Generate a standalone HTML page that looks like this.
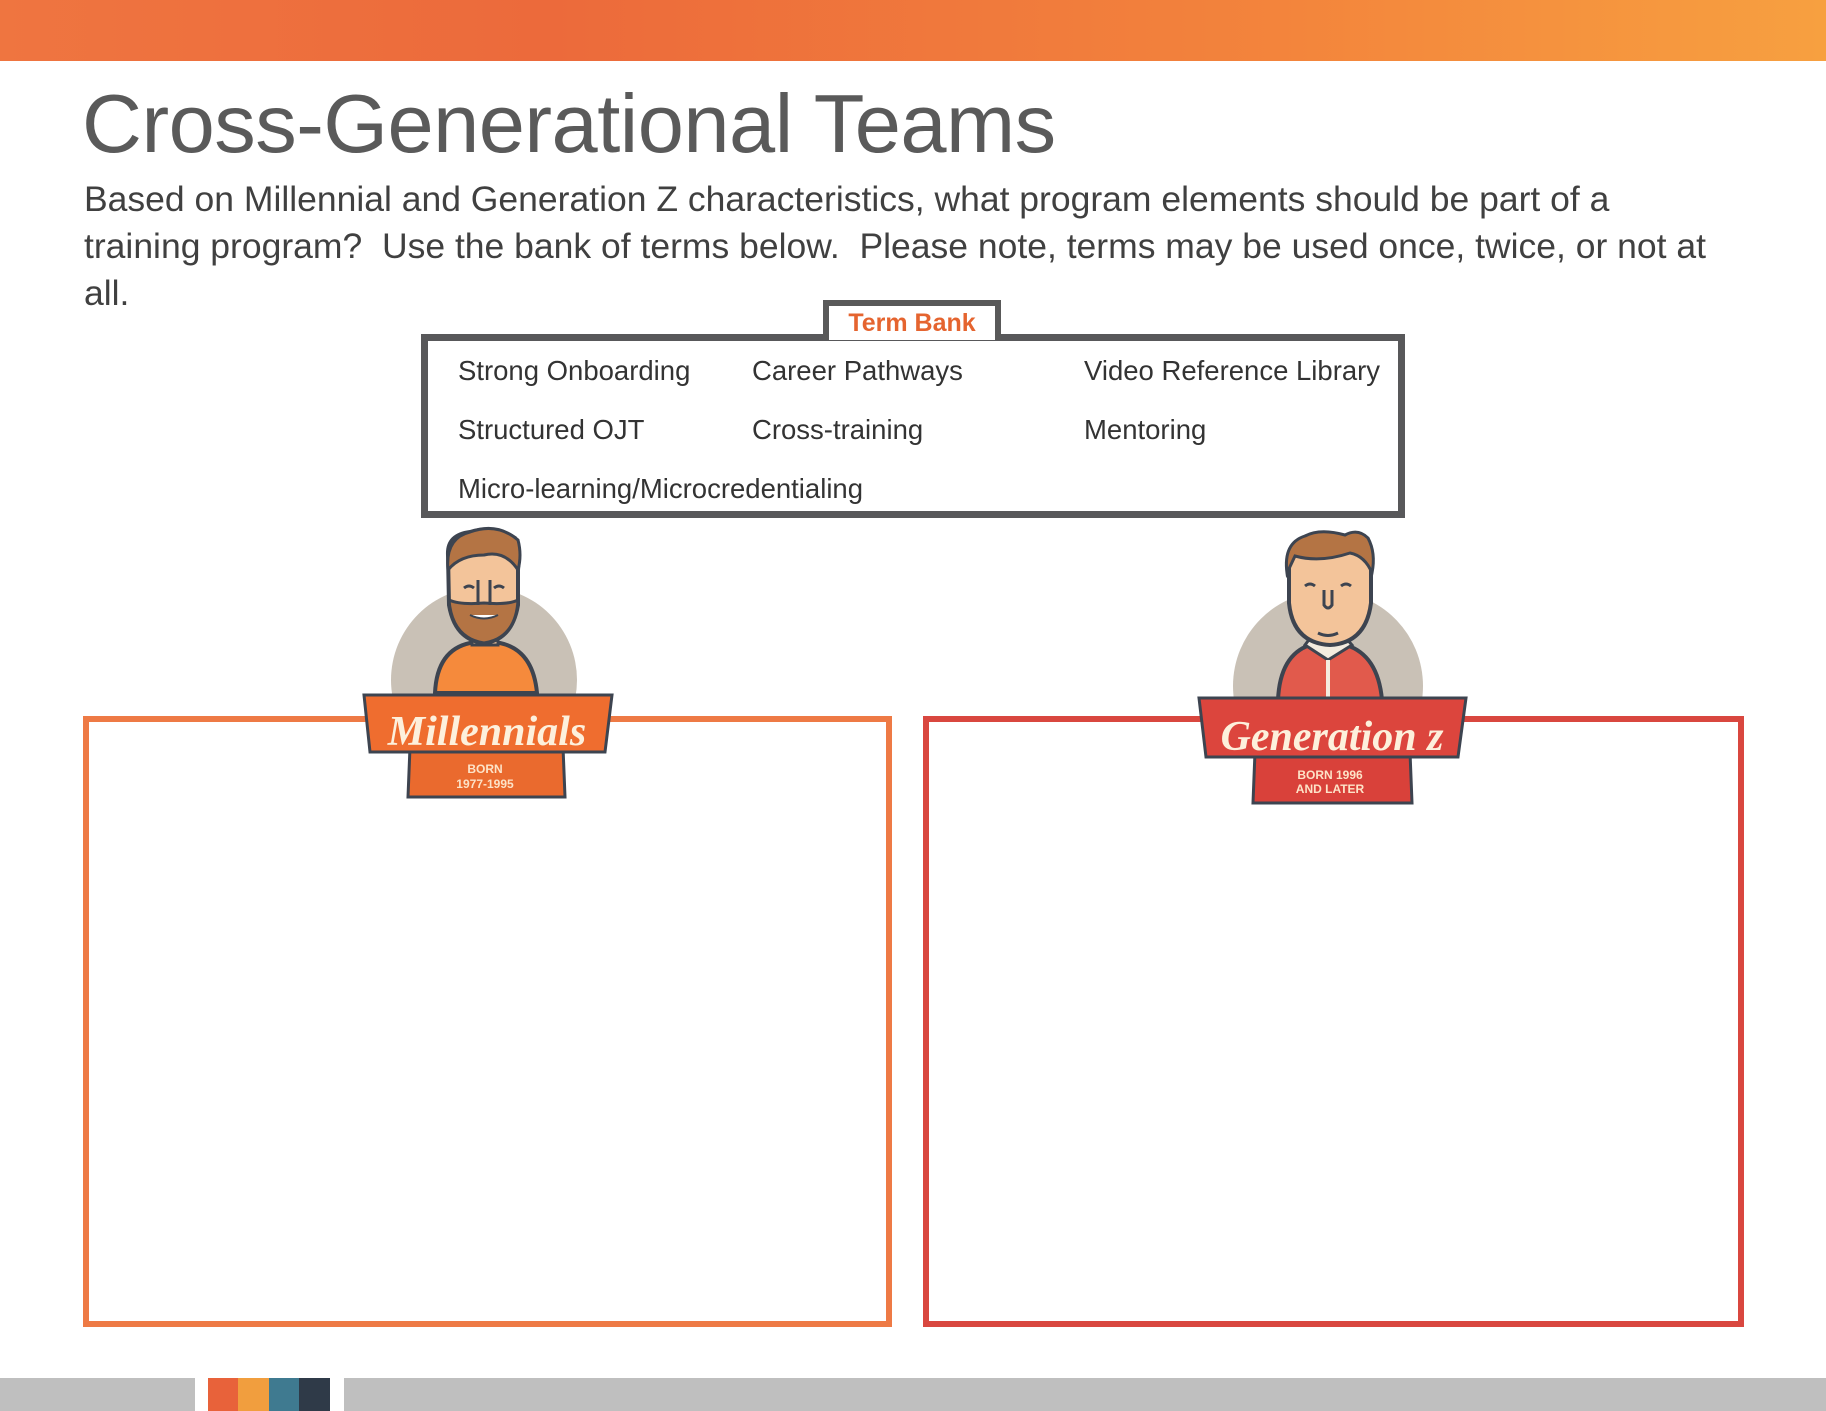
<!DOCTYPE html>
<html><head><meta charset="utf-8"><style>
*{margin:0;padding:0;box-sizing:border-box}
body{width:1826px;height:1411px;position:relative;background:#fff;font-family:"Liberation Sans",sans-serif;overflow:hidden}
.top{position:absolute;left:0;top:0;width:1826px;height:61px;background:linear-gradient(90deg,#ef7540 0%,#ec6a3b 30%,#f3843c 70%,#f7a040 100%)}
h1{position:absolute;left:82px;top:76px;font-size:83px;font-weight:normal;color:#5a5a5a;white-space:nowrap;letter-spacing:-0.5px}
.p{position:absolute;left:84px;top:176px;font-size:35.5px;line-height:47px;color:#404040;white-space:nowrap}
.tb{position:absolute;left:823px;top:300px;width:178px;height:40px;border:6px solid #595959;border-bottom:none;background:#fff;color:#e5642f;font-weight:bold;font-size:25px;text-align:center;line-height:34px;z-index:2}
.bank{position:absolute;left:421px;top:334px;width:984px;height:184px;border:7px solid #58585a}
.t{position:absolute;font-size:27.5px;color:#333;white-space:nowrap}
.bx{position:absolute;border:6px solid}
.g{position:absolute;top:1378px;height:33px;background:#bfbfbf}
.c{position:absolute;top:1378px;height:33px}
</style></head><body>
<div class="top"></div>
<h1>Cross-Generational Teams</h1>
<div class="p">Based on Millennial and Generation Z characteristics, what program elements should be part of a<br>training program?&nbsp; Use the bank of terms below.&nbsp; Please note, terms may be used once, twice, or not at<br>all.</div>
<div class="tb">Term Bank</div>
<div class="bank"></div>
<div class="t" style="left:458px;top:355px">Strong Onboarding</div>
<div class="t" style="left:752px;top:355px">Career Pathways</div>
<div class="t" style="left:1084px;top:355px">Video Reference Library</div>
<div class="t" style="left:458px;top:414px">Structured OJT</div>
<div class="t" style="left:752px;top:414px">Cross-training</div>
<div class="t" style="left:1084px;top:414px">Mentoring</div>
<div class="t" style="left:458px;top:473px">Micro-learning/Microcredentialing</div>
<div class="bx" style="left:83px;top:716px;width:809px;height:611px;border-color:#ee7a45"></div>
<div class="bx" style="left:923px;top:716px;width:821px;height:611px;border-color:#d9473f"></div>
<svg style="position:absolute;left:0;top:0" width="1826" height="1411">
<circle cx="484" cy="680" r="93" fill="#c9c1b6"/>
<g transform="translate(0,10)">
<path d="M435 683 Q437 640 470 633 L500 633 Q533 640 537 683Z" fill="#f58a3c" stroke="#3d4450" stroke-width="4"/>
<rect x="472" y="620" width="26" height="15" fill="#f3c49a" stroke="#3d4450" stroke-width="3"/>
<path d="M448 545 Q447 525 470 522 Q495 515 515 528 Q520 540 518 560 L518 595 Q512 630 484 633 Q455 630 449 595Z" fill="#f3c49a" stroke="#3d4450" stroke-width="4"/>
<path d="M448 560 Q445 528 470 522 Q497 512 518 530 Q522 545 518 560 Q505 540 484 545 Q460 545 448 560Z" fill="#b47444" stroke="#3d4450" stroke-width="3"/>
<path d="M449 590 Q460 595 484 593 Q508 595 518 590 Q516 628 484 633 Q452 628 449 590Z" fill="#b47444" stroke="#3d4450" stroke-width="3"/>
<path d="M470 605 Q484 612 498 605" fill="#fff" stroke="#3d4450" stroke-width="2"/>
<path d="M478 570 L478 595 M490 570 L490 595" stroke="#3d4450" stroke-width="3"/>
<path d="M464 578 q5-4 10 0 M494 578 q5-4 10 0" stroke="#3d4450" stroke-width="3" fill="none"/>
</g>
<path d="M410 747 L563 747 L565 797 L408 797Z" fill="#ea6a2e" stroke="#3d4450" stroke-width="3"/>
<path d="M364 695 L612 695 L605 752 L370 752Z" fill="#ef6d2f" stroke="#3d4450" stroke-width="3"/>
<text x="487" y="745" text-anchor="middle" font-family="Liberation Serif,serif" font-style="italic" font-weight="bold" font-size="42" fill="#fdf0dc">Millennials</text>
<text x="485" y="773" text-anchor="middle" font-family="Liberation Sans,sans-serif" font-weight="bold" font-size="12" fill="#fde3c8">BORN</text>
<text x="485" y="788" text-anchor="middle" font-family="Liberation Sans,sans-serif" font-weight="bold" font-size="12" fill="#fde3c8">1977-1995</text>
<circle cx="1328" cy="686" r="95" fill="#c9c1b6"/>
<g transform="translate(0,8)">
<path d="M1278 692 Q1280 647 1310 637 L1346 637 Q1378 647 1382 692Z" fill="#e15a4c" stroke="#3d4450" stroke-width="4"/>
<path d="M1305 637 L1328 652 L1352 637 L1345 629 L1311 629Z" fill="#f4ece0" stroke="#3d4450" stroke-width="3"/>
<path d="M1328 652 L1328 692" stroke="#f4ece0" stroke-width="4"/>
<path d="M1289 560 Q1288 532 1328 530 Q1370 532 1371 560 L1371 595 Q1366 635 1330 637 Q1293 635 1289 595Z" fill="#f3c49a" stroke="#3d4450" stroke-width="4"/>
<path d="M1287 565 Q1283 535 1305 528 Q1320 520 1345 527 Q1358 520 1368 530 Q1376 545 1372 565 Q1365 548 1350 545 Q1320 555 1295 548Z" fill="#b47444" stroke="#3d4450" stroke-width="3"/>
<path d="M1324 582 L1324 597 Q1328 603 1332 597 L1332 582" stroke="#3d4450" stroke-width="3" fill="none"/>
<path d="M1318 625 q10 5 20 0" stroke="#3d4450" stroke-width="3" fill="none"/>
<path d="M1305 578 q5-4 10 0 M1341 578 q5-4 10 0" stroke="#3d4450" stroke-width="3" fill="none"/>
</g>
<path d="M1255 752 L1410 752 L1412 803 L1253 803Z" fill="#d9413a" stroke="#3d4450" stroke-width="3"/>
<path d="M1199 698 L1466 698 L1458 757 L1206 757Z" fill="#dc453d" stroke="#3d4450" stroke-width="3"/>
<text x="1332" y="750" text-anchor="middle" font-family="Liberation Serif,serif" font-style="italic" font-weight="bold" font-size="42" fill="#fdf0dc">Generation z</text>
<text x="1330" y="779" text-anchor="middle" font-family="Liberation Sans,sans-serif" font-weight="bold" font-size="12" fill="#fde3c8">BORN 1996</text>
<text x="1330" y="793" text-anchor="middle" font-family="Liberation Sans,sans-serif" font-weight="bold" font-size="12" fill="#fde3c8">AND LATER</text>
</svg>
<div class="g" style="left:0;width:195px"></div>
<div class="c" style="left:208px;width:30px;background:#e8623a"></div>
<div class="c" style="left:238px;width:31px;background:#f19e3e"></div>
<div class="c" style="left:269px;width:30px;background:#3f7a90"></div>
<div class="c" style="left:299px;width:31px;background:#2f3a48"></div>
<div class="g" style="left:344px;width:1482px"></div>
</body></html>
